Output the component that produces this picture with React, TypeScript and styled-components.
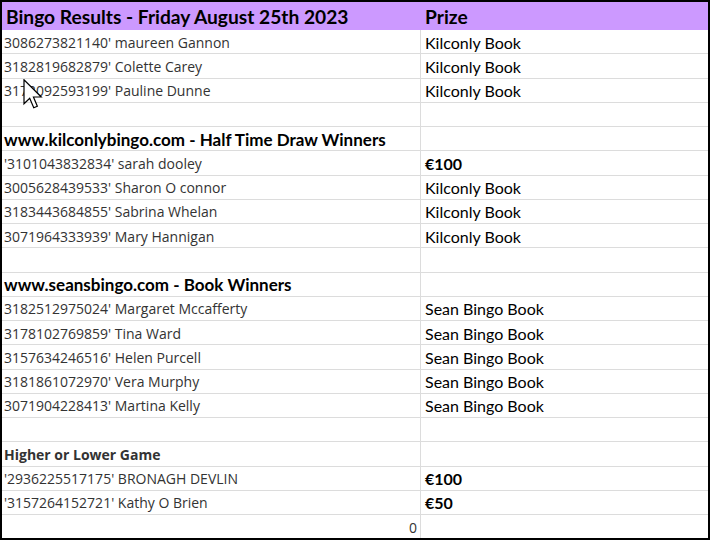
import React from "react";
import styled, { createGlobalStyle } from "styled-components";

const Global = createGlobalStyle`
  html, body { margin: 0; padding: 0; background: #fff; }
  * { box-sizing: border-box; }
`;

const Sheet = styled.div`
  position: relative;
  width: 710px;
  height: 540px;
  border: 2px solid #000;
  background: #fff;
  display: flex;
  flex-direction: column;
  overflow: hidden;
`;

const Header = styled.div`
  height: 28px;
  background: #cc99ff;
  display: grid;
  grid-template-columns: 419px 1fr;
  align-items: center;
  font-family: Lato, "Liberation Sans", sans-serif;
  font-weight: 700;
  color: #000;
`;

const HeaderTitle = styled.div`
  padding: 1px 0 0 4px;
  font-size: 19.2px;
  white-space: nowrap;
`;

const HeaderPrize = styled.div`
  padding: 1px 0 0 4px;
  font-size: 19.2px;
`;

const Row = styled.div<{ $last?: boolean }>`
  height: ${(p) => (p.$last ? "23px" : "24.25px")};
  display: grid;
  grid-template-columns: 419px 1fr;
  border-bottom: ${(p) => (p.$last ? "none" : "1px solid #dcdcdc")};
`;

const NameCell = styled.div<{ $kind?: "name" | "section" | "sectionAlt" | "number" }>`
  border-right: 1px solid #dcdcdc;
  padding: 1px 3px 0 2px;
  display: flex;
  align-items: center;
  justify-content: ${(p) => (p.$kind === "number" ? "flex-end" : "flex-start")};
  white-space: nowrap;
  font-family: ${(p) =>
    p.$kind === "section" ? 'Lato, "Liberation Sans", sans-serif' : '"Open Sans", "Noto Sans", sans-serif'};
  font-weight: ${(p) => (p.$kind === "section" || p.$kind === "sectionAlt" ? 700 : 400)};
  font-size: ${(p) => (p.$kind === "section" ? "17px" : "14px")};
  color: ${(p) => (p.$kind === "section" ? "#000" : "#333")};
`;

const PrizeCell = styled.div<{ $bold?: boolean }>`
  padding: 1px 0 0 4px;
  display: flex;
  align-items: center;
  white-space: nowrap;
  font-family: Lato, "Liberation Sans", sans-serif;
  font-weight: ${(p) => (p.$bold ? 700 : 400)};
  font-size: 16px;
  color: #000;
`;

const Cursor = styled.svg`
  position: absolute;
  left: 21px;
  top: 77px;
`;

type RowData = {
  name?: string;
  prize?: string;
  kind?: "name" | "section" | "sectionAlt" | "number";
  bold?: boolean;
};

const rows: RowData[] = [
  { name: "3086273821140' maureen Gannon", prize: "Kilconly Book" },
  { name: "3182819682879' Colette Carey", prize: "Kilconly Book" },
  { name: "3172092593199' Pauline Dunne", prize: "Kilconly Book" },
  {},
  { name: "www.kilconlybingo.com - Half Time Draw Winners", kind: "section" },
  { name: "'3101043832834' sarah dooley", prize: "€100", bold: true },
  { name: "3005628439533' Sharon O connor", prize: "Kilconly Book" },
  { name: "3183443684855' Sabrina Whelan", prize: "Kilconly Book" },
  { name: "3071964333939' Mary Hannigan", prize: "Kilconly Book" },
  {},
  { name: "www.seansbingo.com - Book Winners", kind: "section" },
  { name: "3182512975024' Margaret Mccafferty", prize: "Sean Bingo Book" },
  { name: "3178102769859' Tina Ward", prize: "Sean Bingo Book" },
  { name: "3157634246516' Helen Purcell", prize: "Sean Bingo Book" },
  { name: "3181861072970' Vera Murphy", prize: "Sean Bingo Book" },
  { name: "3071904228413' Martina Kelly", prize: "Sean Bingo Book" },
  {},
  { name: "Higher or Lower Game", kind: "sectionAlt" },
  { name: "'2936225517175' BRONAGH DEVLIN", prize: "€100", bold: true },
  { name: "'3157264152721' Kathy O Brien", prize: "€50", bold: true },
  { name: "0", kind: "number" },
];

export default function App() {
  return (
    <>
      <Global />
      <Sheet>
        <Header>
          <HeaderTitle>Bingo Results - Friday August 25th 2023</HeaderTitle>
          <HeaderPrize>Prize</HeaderPrize>
        </Header>
        {rows.map((r, i) => (
          <Row key={i} $last={i === rows.length - 1}>
            <NameCell $kind={r.kind ?? "name"}>{r.name ?? ""}</NameCell>
            <PrizeCell $bold={r.bold}>{r.prize ?? ""}</PrizeCell>
          </Row>
        ))}
        <Cursor width="20" height="30" viewBox="0 0 13 20">
          <path
            d="M0.5 0.5 L0.5 16.5 L4.3 12.9 L7 19.2 L9.4 18.2 L6.8 12 L12 12 Z"
            fill="#fff"
            stroke="#000"
            strokeWidth="0.8"
            strokeLinejoin="miter"
          />
        </Cursor>
      </Sheet>
    </>
  );
}
